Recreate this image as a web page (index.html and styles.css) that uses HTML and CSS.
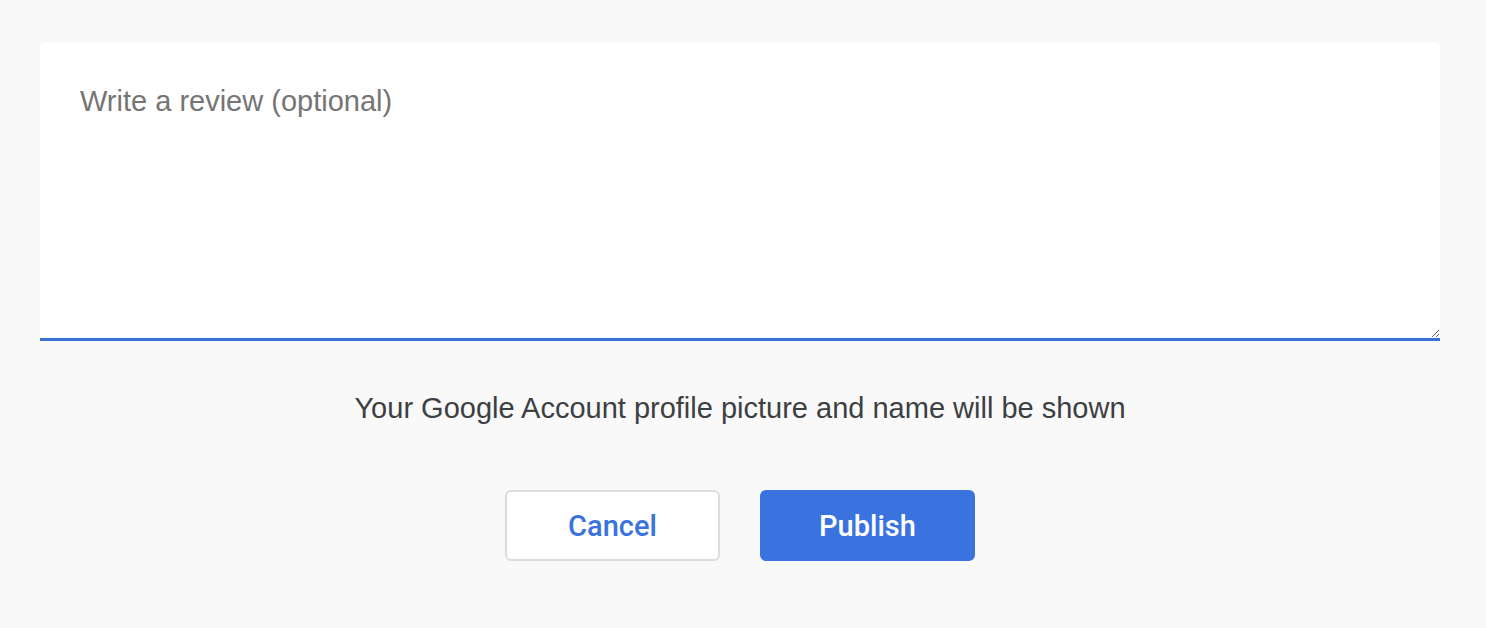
FILE: index.html
```
<!DOCTYPE html>
<html>
<head>
<meta charset="utf-8">
<link rel="stylesheet" href="styles.css">
</head>
<body>
<div class="page">
  <div class="field">
    <textarea class="review" placeholder="Write a review (optional)"></textarea>
  </div>
  <p class="note">Your Google Account profile picture and name will be shown</p>
  <div class="actions">
    <button class="btn cancel">Cancel</button>
    <button class="btn publish">Publish</button>
  </div>
</div>
</body>
</html>
```
FILE: styles.css
```
html, body {
  margin: 0;
  padding: 0;
  background: #f9f9f9;
}
body {
  font-family: "Liberation Sans", Arial, sans-serif;
}
.page {
  padding: 42px 46px 0 40px;
  display: flex;
  flex-direction: column;
}
.field {
  display: flex;
}
.review {
  flex: 1;
  height: 299px;
  box-sizing: border-box;
  border: none;
  border-bottom: 3px solid #3a6fd6;
  border-radius: 6px 6px 0 0;
  background: #fff;
  padding: 43px 40px 41px;
  font-family: "Liberation Sans", Arial, sans-serif;
  font-size: 29px;
  color: #202124;
  outline: none;
  resize: vertical;
  margin: 0;
}
.review::placeholder {
  color: #757575;
}
.note {
  margin: 51px 0 0;
  text-align: center;
  font-size: 29px;
  color: #3c4043;
}
.actions {
  display: flex;
  justify-content: center;
  gap: 40px;
  margin-top: 65px;
}
.btn {
  width: 215px;
  height: 71px;
  box-sizing: border-box;
  border-radius: 6px;
  font-family: Roboto, "Open Sans", sans-serif;
  font-weight: 500;
  font-size: 29px;
  cursor: pointer;
}
.cancel {
  background: #fff;
  border: 2px solid #dadce0;
  color: #3a73e0;
}
.publish {
  background: #3a73e0;
  border: none;
  color: #fff;
}
```
